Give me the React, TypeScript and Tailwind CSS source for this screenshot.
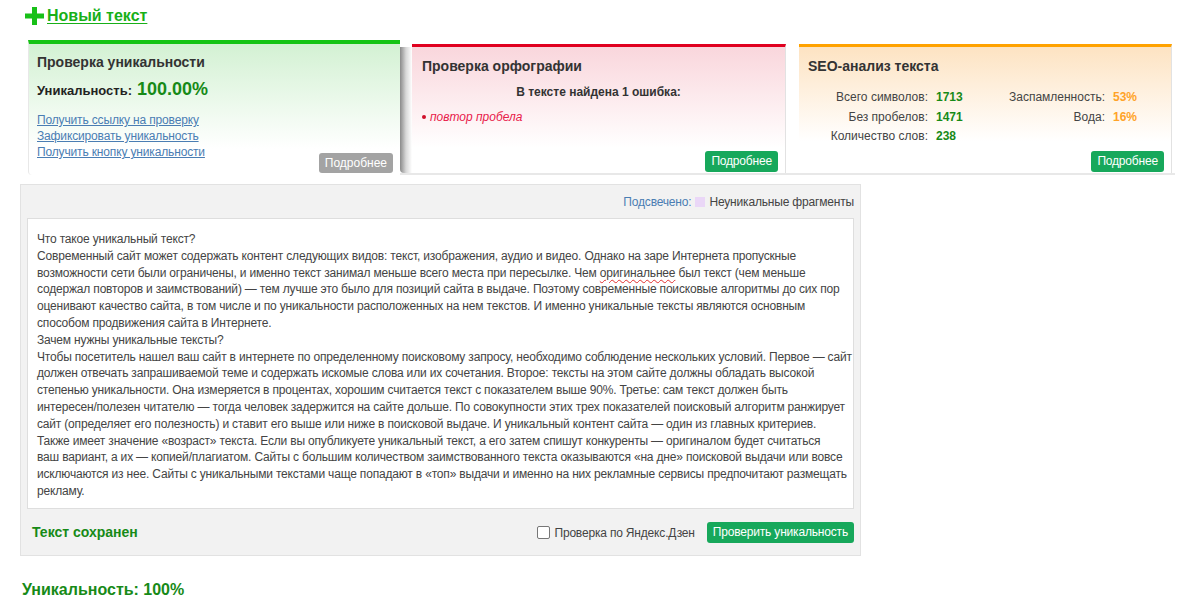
import React from "react";

const lines: React.ReactNode[] = [
  "Что такое уникальный текст?",
  "Современный сайт может содержать контент следующих видов: текст, изображения, аудио и видео. Однако на заре Интернета пропускные",
  <>
    возможности сети были ограничены, и именно текст занимал меньше всего места при пересылке. Чем{" "}
    <span className="underline decoration-wavy decoration-[#e03030] decoration-1 underline-offset-2">оригинальнее</span> был текст (чем меньше
  </>,
  "содержал повторов и заимствований) — тем лучше это было для позиций сайта в выдаче. Поэтому современные поисковые алгоритмы до сих пор",
  "оценивают качество сайта, в том числе и по уникальности расположенных на нем текстов. И именно уникальные тексты являются основным",
  "способом продвижения сайта в Интернете.",
  "Зачем нужны уникальные тексты?",
  "Чтобы посетитель нашел ваш сайт в интернете по определенному поисковому запросу, необходимо соблюдение нескольких условий. Первое — сайт",
  "должен отвечать запрашиваемой теме и содержать искомые слова или их сочетания. Второе: тексты на этом сайте должны обладать высокой",
  "степенью уникальности. Она измеряется в процентах, хорошим считается текст с показателем выше 90%. Третье: сам текст должен быть",
  "интересен/полезен читателю — тогда человек задержится на сайте дольше. По совокупности этих трех показателей поисковый алгоритм ранжирует",
  "сайт (определяет его полезность) и ставит его выше или ниже в поисковой выдаче. И уникальный контент сайта — один из главных критериев.",
  "Также имеет значение «возраст» текста. Если вы опубликуете уникальный текст, а его затем спишут конкуренты — оригиналом будет считаться",
  "ваш вариант, а их — копией/плагиатом. Сайты с большим количеством заимствованного текста оказываются «на дне» поисковой выдачи или вовсе",
  "исключаются из нее. Сайты с уникальными текстами чаще попадают в «топ» выдачи и именно на них рекламные сервисы предпочитают размещать",
  "рекламу.",
];

function GreenBtn({ children }: { children: React.ReactNode }) {
  return (
    <button className="h-[21px] px-[6px] rounded-[3px] bg-[#17a85b] text-white text-[12px] leading-[21px] tracking-[-0.18px]">
      {children}
    </button>
  );
}

export default function App() {
  return (
    <div className="w-[1200px] h-[609px] bg-white font-['Liberation_Sans',Arial,sans-serif] text-[#333] overflow-hidden">
      {/* header */}
      <div className="h-[40px] pl-[25px] pt-[6px] flex items-start">
        <a className="flex items-center gap-[3px] text-[#18b018] font-bold text-[16px] leading-[20px] underline underline-offset-2">
          <svg width="19" height="18" viewBox="0 0 19 18">
            <rect x="7" y="0" width="5" height="18" fill="#18c018" />
            <rect x="0" y="6.5" width="19" height="5" fill="#18c018" />
          </svg>
          Новый текст
        </a>
      </div>

      {/* cards */}
      <div className="flex items-end pl-[28px]">
        <div className="w-[372px] h-[135px] border-t-4 border-[#14c414] border-l border-l-[#e8e8e8] rounded-bl-[4px] bg-gradient-to-b from-[#d3f1d3] to-white to-[80%] px-[8px] pt-[9px] relative">
          <div className="font-bold text-[14px] leading-[18px] text-[#333]">Проверка уникальности</div>
          <div className="mt-[5px] flex items-baseline gap-[5px]">
            <span className="font-bold text-[13px] text-[#222]">Уникальность:</span>
            <span className="font-bold text-[18px] text-[#178a17]">100.00%</span>
          </div>
          <div className="mt-[9px] flex flex-col text-[12px] leading-[16px] text-[#4a7db3] tracking-[-0.15px]">
            <a className="underline">Получить ссылку на проверку</a>
            <a className="underline">Зафиксировать уникальность</a>
            <a className="underline">Получить кнопку уникальности</a>
          </div>
          <button className="absolute right-[7px] bottom-[2px] h-[20px] px-[6px] rounded-[3px] bg-[#a3a3a3] text-white text-[12px] leading-[20px]">
            Подробнее
          </button>
        </div>
        <div className="flex items-end border-b-2 border-[#e8e8e8] pr-[3px]">
          <div className="w-[12px] h-[126px] bg-gradient-to-r from-[#8a8a8a] via-[#d8d8d8] to-white rounded-bl-[4px]" />
          <div className="w-[374px] h-[129px] border-t-[3px] border-[#e0001f] border-r border-r-[#e2e2e2] bg-gradient-to-b from-[#f9d6dc] to-white to-[80%] px-[10px] pt-[10px] relative">
            <div className="font-bold text-[14px] leading-[18px] text-[#333]">Проверка орфографии</div>
            <div className="mt-[9px] text-center font-bold text-[12px] leading-[16px] text-[#333]">В тексте найдена 1 ошибка:</div>
            <div className="mt-[8px] text-[12px] italic text-[#e8204a] flex items-center gap-[4px]">
              <span className="w-[4px] h-[4px] rounded-full bg-[#d0102a] inline-block" />
              повтор пробела
            </div>
            <div className="absolute right-[7px] bottom-[1px]">
              <GreenBtn>Подробнее</GreenBtn>
            </div>
          </div>
          <div className="w-[13px]" />
          <div className="w-[373px] h-[129px] border-t-[3px] border-[#ffa200] border-r border-r-[#e2e2e2] bg-gradient-to-b from-[#fde3c2] to-white to-[75%] px-[9px] pt-[10px] relative">
            <div className="font-bold text-[14px] leading-[18px] text-[#333]">SEO-анализ текста</div>
            <div className="mt-[13px] flex text-[12px] leading-[19.5px]">
              <div className="w-[120px] text-right text-[#444]">
                <div>Всего символов:</div>
                <div>Без пробелов:</div>
                <div>Количество слов:</div>
              </div>
              <div className="w-[80px] pl-[8px] font-bold text-[#178a17]">
                <div>1713</div>
                <div>1471</div>
                <div>238</div>
              </div>
              <div className="w-[97px] text-right text-[#444]">
                <div>Заспамленность:</div>
                <div>Вода:</div>
              </div>
              <div className="pl-[8px] font-bold text-[#ffa328]">
                <div>53%</div>
                <div>16%</div>
              </div>
            </div>
            <div className="absolute right-[7px] bottom-[1px]">
              <GreenBtn>Подробнее</GreenBtn>
            </div>
          </div>
        </div>
      </div>

      {/* main box */}
      <div className="ml-[20px] mt-[9px] w-[841px] border border-[#e2e2e2] bg-[#f2f2f2] px-[6px] pb-[12px]">
        <div className="h-[33px] flex items-center justify-end gap-[4px] text-[12px] tracking-[-0.18px]">
          <span className="text-[#4a7db3]">Подсвечено:</span>
          <span className="w-[10px] h-[10px] bg-[#ead7f7] inline-block" />
          <span className="text-[#444]">Неуникальные фрагменты</span>
        </div>
        <div className="h-[291px] bg-white border border-[#dedede] pl-[9px] pt-[12px] text-[12px] leading-[16.8px] text-[#444] tracking-[-0.18px]">
          {lines.map((l, i) => (
            <div key={i} className="whitespace-nowrap">
              {l}
            </div>
          ))}
        </div>
        <div className="mt-[13px] flex items-center">
          <div className="pl-[5px] font-bold text-[14px] text-[#178a17]">Текст сохранен</div>
          <div className="flex-1" />
          <label className="flex items-center gap-[4px] text-[12px] text-[#444] mr-[12px] tracking-[-0.18px]">
            <span className="w-[13px] h-[13px] border border-[#777] rounded-[2px] bg-white inline-block" />
            Проверка по Яндекс.Дзен
          </label>
          <GreenBtn>Проверить уникальность</GreenBtn>
        </div>
      </div>

      <div className="pl-[22px] mt-[22px] font-bold text-[16px] text-[#178a17]">Уникальность: 100%</div>
    </div>
  );
}
